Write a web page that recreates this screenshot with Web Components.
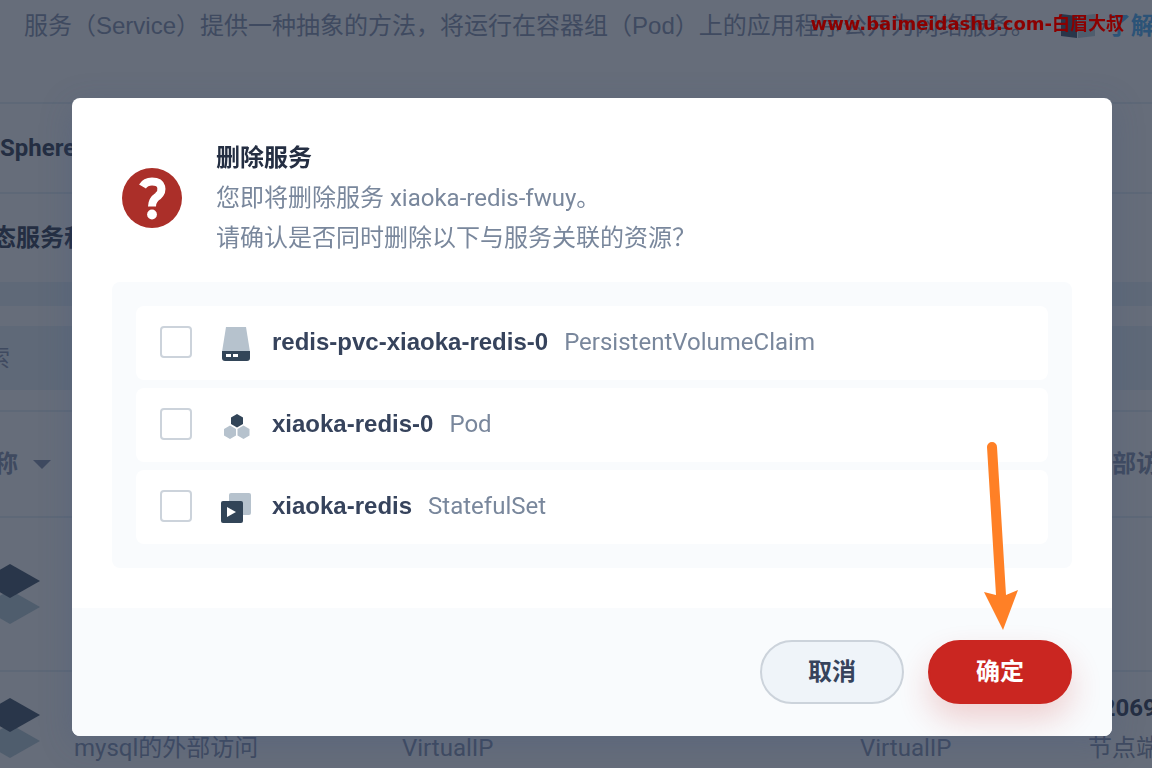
<!DOCTYPE html>
<html lang="zh-CN">
<head>
<meta charset="utf-8">
<title>删除服务</title>
<style>
html,body{height:100%}
body{margin:0;overflow:hidden;background:#666d7a;font:24px/40px Roboto,"Noto Sans CJK SC",sans-serif;color:#3f4a60}
</style>
</head>
<body>
<service-page></service-page>
<confirm-dialog heading="删除服务">
  <span slot="message">您即将删除服务 xiaoka-redis-fwuy。<br>请确认是否同时删除以下与服务关联的资源？</span>
  <resource-item name="redis-pvc-xiaoka-redis-0" kind="PersistentVolumeClaim" icon="storage"></resource-item>
  <resource-item name="xiaoka-redis-0" kind="Pod" icon="pod"></resource-item>
  <resource-item name="xiaoka-redis" kind="StatefulSet" icon="stateful"></resource-item>
</confirm-dialog>
<water-mark>www.baimeidashu.com-白眉大叔</water-mark>
<script>
const ICONS = {
  storage: '<path fill="#b6c2cd" d="M10 5h20l4 25H6z"/><path fill="#324558" d="M6 29h28v7a3 3 0 0 1-3 3H9a3 3 0 0 1-3-3z"/><path fill="#fff" d="M10 32h5v3h-5zM17 32h5v3h-5z"/>',
  pod: '<path fill="#324558" d="M21 10l6 3.400v6.600l-6 3.400-6-3.400v-6.600z"/><path fill="#b6c2cd" d="M14 21.500l6 3.400v6.600l-6 3.400-6-3.400v-6.600zM27.500 21.500l6 3.400v6.600l-6 3.400-6-3.400v-6.600z"/>',
  stateful: '<rect fill="#b6c2cd" x="13" y="7" width="22" height="22" rx="2"/><rect fill="#324558" x="5" y="15" width="22" height="22" rx="2"/><path fill="#fff" d="M11 21l9 5-9 5z"/>',
  layers: '<path fill="#4f5d6d" d="M30 26l30 17-30 17L0 43z"/><path fill="#29364a" d="M30 0l30 17-30 17L0 17z"/>',
  book: '<path fill="#29364a" d="M0 0l16 2v22L0 22z"/><path fill="#4f5d6d" d="M34 0L17 2v22l17-2z"/>'
};
const define = (name, render) => customElements.define(name, class extends HTMLElement {
  connectedCallback() {
    if (this.shadowRoot) return;
    this.attachShadow({ mode: 'open' }).innerHTML = render(this);
  }
});

define('service-row', () => `
<style>
:host{display:flex;align-items:center;box-sizing:border-box;height:90px;padding-left:32px;border-top:2px solid #5e6877;color:#242e42;font-weight:700}
</style><slot></slot>`);

define('service-table', () => `
<style>
:host{display:block}
table{width:100%;border-collapse:collapse;table-layout:fixed}
th,td{padding:0;border-top:2px solid #5e6877;text-align:left;white-space:nowrap;font-weight:400}
th{height:104px;font-weight:700}
.first td{height:152px}
.second td{height:112px}
.name{width:442px}.status{width:458px}.ip{width:228px}
.sort{display:flex;align-items:center;gap:15px;padding-left:10px}
.sort i{border:9px solid transparent;border-top-color:#3f4a60;border-bottom:0}
.cell{display:flex;align-items:center;gap:34px;padding-left:20px}
svg{display:block;width:60px;height:60px}
b{display:block;color:#242e42}
.second b{min-height:40px}
</style>
<table>
<colgroup><col class="name"><col class="status"><col class="ip"><col></colgroup>
<thead><tr><th><div class="sort">名称<i></i></div></th><th></th><th></th><th>外部访问</th></tr></thead>
<tbody>
<tr class="first"><td><div class="cell"><svg viewBox="0 0 60 60">${ICONS.layers}</svg></div></td><td></td><td></td><td></td></tr>
<tr class="second"><td><div class="cell"><svg viewBox="0 0 60 60">${ICONS.layers}</svg><div><b></b>mysql的外部访问</div></div></td><td><b></b>VirtualIP</td><td><b></b>VirtualIP</td><td><b>32069</b>节点端口</td></tr>
</tbody></table>`);

define('service-page', () => `
<style>
:host{display:block;height:100%;overflow:hidden}
header{display:flex;align-items:center;box-sizing:border-box;height:102px;padding:0 0 50px 24px;white-space:nowrap}
header p{margin:0;flex:none;font-family:"Liberation Sans","Noto Sans CJK SC",sans-serif}
a{display:flex;align-items:center;gap:12px;margin-left:26px;color:#2c5377;font-weight:700;text-decoration:none;flex:none}
a svg{width:34px;height:24px}
main{margin-left:-40px}
.frag{padding-left:8px}
.tools{border-top:24px solid #5f6978;padding:20px 0;background:#666d7a}
label{display:block;height:64px;background:#5f6978}
input{width:100%;height:64px;box-sizing:border-box;border:0;background:none;padding:0 0 0 2px;font:inherit;color:inherit}
input::placeholder{color:#3f4a60;opacity:1}
</style>
<header><p>服务（Service）提供一种抽象的方法，将运行在容器组（Pod）上的应用程序公开为网络服务。</p>
<a href="#"><svg viewBox="0 0 34 24">${ICONS.book}</svg>了解更多</a></header>
<main>
<service-row><span class="frag">Sphere</span></service-row>
<service-row>态服务和</service-row>
<div class="tools"><label><input type="search" placeholder="搜索" aria-label="搜索"></label></div>
<service-table></service-table>
</main>`);

define('resource-item', el => `
<style>
:host{display:block;background:#fff;border-radius:8px}
label{display:flex;align-items:center;height:74px;padding:0 24px 2px;box-sizing:border-box}
input{appearance:none;flex:none;box-sizing:border-box;width:32px;height:32px;margin:0 24px 0 0;border:2px solid #ccd3db;border-radius:4px;background:#fff}
svg{flex:none;width:40px;height:40px;margin-right:16px}
b{font-family:"Liberation Sans",sans-serif;color:#36435c;margin-right:16px}
span{color:#79879c}
</style>
<label><input type="checkbox"><svg viewBox="0 0 40 40">${ICONS[el.getAttribute('icon')]}</svg><b>${el.getAttribute('name')}</b><span>${el.getAttribute('kind')}</span></label>`);

define('pill-button', () => `
<style>
:host{display:block}
button{display:block;box-sizing:border-box;width:144px;height:64px;border:2px solid #ccd3db;border-radius:32px;background:#eff4f9;color:#36435c;font:inherit;font-weight:700;padding:0}
:host([primary]) button{border-color:#ca2621;background:#ca2621;color:#fff;box-shadow:0 16px 32px rgba(202,38,33,.2)}
</style><button type="button"><slot></slot></button>`);

define('confirm-dialog', el => `
<style>
:host{position:fixed;inset:0;padding:98px 40px 0 72px}
section{background:#fff;border-radius:8px;overflow:hidden;box-shadow:0 8px 32px rgba(60,85,130,.25)}
.intro{display:flex;align-items:center;gap:24px;padding:40px 40px 24px;color:#79879c}
.intro svg{width:80px;height:80px;flex:none}
h1{margin:0;font-size:24px;line-height:40px;color:#242e42}
.list{display:grid;gap:8px;margin:0 40px 40px;padding:24px;border-radius:8px;background:#f9fbfd}
footer{position:relative;display:flex;justify-content:flex-end;gap:24px;padding:32px 40px;background:#f9fbfd}
.pointer{position:absolute;right:94px;bottom:106px;width:36px;height:192px}
</style>
<section role="dialog" aria-modal="true">
<div class="intro"><svg viewBox="0 0 80 80"><circle cx="40" cy="40" r="30" fill="#ab2f29"/><path d="M30.500 28.500q3-5 9.500-5c11 0 11.500 9.500 6 14.500q-6 4-6 10.500" fill="none" stroke="#fff" stroke-width="8"/><circle cx="40" cy="56.500" r="4.900" fill="#fff"/></svg>
<div><h1>${el.getAttribute('heading')}</h1><slot name="message"></slot></div></div>
<div class="list"><slot></slot></div>
<footer><pill-button>取消</pill-button><pill-button primary>确定</pill-button>
<svg class="pointer" viewBox="0 0 36 192"><path fill="#ff8026" d="M5 9a5 5 0 0 1 10 0l9 148 12-5-15 40L2 154l12 3z"/></svg></footer>
</section>`);

define('water-mark', () => `
<style>
:host{position:fixed;top:8px;right:28px;font:700 18px/32px "DejaVu Sans","Noto Sans CJK SC",sans-serif;color:#8b0000;white-space:nowrap;pointer-events:none}
</style><slot></slot>`);
</script>
</body>
</html>
